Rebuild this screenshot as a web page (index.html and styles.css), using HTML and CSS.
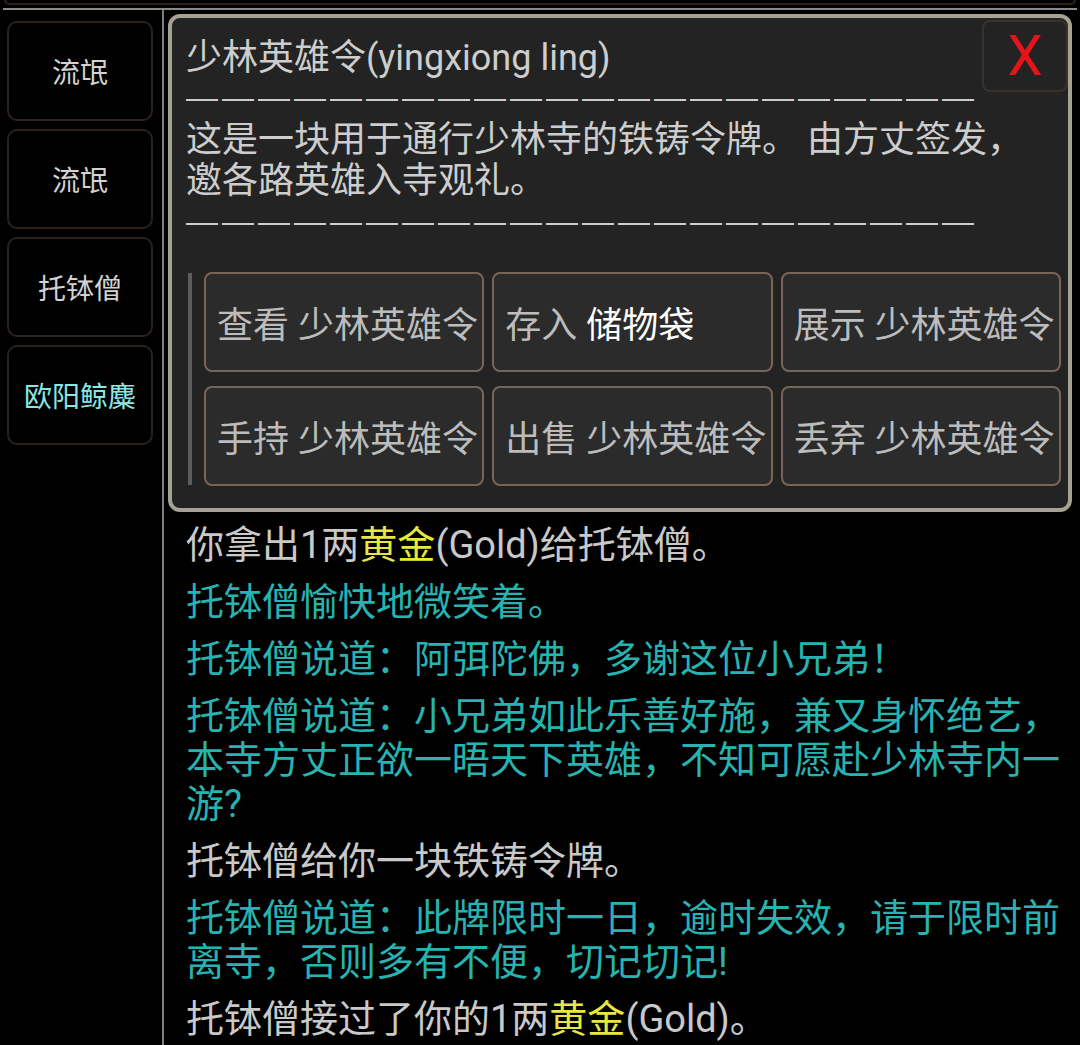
FILE: index.html
```html
<!DOCTYPE html>
<html lang="zh">
<head>
    <meta charset="UTF-8">
    <meta name="viewport" content="width=device-width, initial-scale=1.0">
    <title>少林英雄令</title>
    <link rel="stylesheet" href="styles.css">
</head>
<body>
<div class="topbox"></div>
<div class="rule"></div>
<div class="main">
    <div class="sidebar">
        <div class="npc">流氓</div>
        <div class="npc">流氓</div>
        <div class="npc">托钵僧</div>
        <div class="npc player">欧阳鲸麋</div>
    </div>
    <div class="content">
        <div class="modal">
            <div class="close">X</div>
            <div class="title">少林英雄令(yingxiong ling)</div>
            <div class="dash">——————————————————————</div>
            <div class="desc">这是一块用于通行少林寺的铁铸令牌。 由方丈签发，<br>邀各路英雄入寺观礼。</div>
            <div class="dash">——————————————————————</div>
            <div class="actions">
                <div class="bar"></div>
                <div class="grid">
                    <div class="act">查看 少林英雄令</div>
                    <div class="act">存入 <span class="bright">储物袋</span></div>
                    <div class="act">展示 少林英雄令</div>
                    <div class="act">手持 少林英雄令</div>
                    <div class="act">出售 少林英雄令</div>
                    <div class="act">丢弃 少林英雄令</div>
                </div>
            </div>
        </div>
        <div class="log">
            <p>你拿出1两<span class="gold">黄金</span>(Gold)给托钵僧。</p>
            <p class="cyan">托钵僧愉快地微笑着。</p>
            <p class="cyan">托钵僧说道：阿弭陀佛，多谢这位小兄弟！</p>
            <p class="cyan">托钵僧说道：小兄弟如此乐善好施，兼又身怀绝艺，本寺方丈正欲一晤天下英雄，不知可愿赴少林寺内一游?</p>
            <p>托钵僧给你一块铁铸令牌。</p>
            <p class="cyan">托钵僧说道：此牌限时一日，逾时失效，请于限时前离寺，否则多有不便，切记切记!</p>
            <p>托钵僧接过了你的1两<span class="gold">黄金</span>(Gold)。</p>
        </div>
    </div>
</div>
</body>
</html>
```

FILE: styles.css
```css
html, body {
    margin: 0;
    background: #000;
    overflow: hidden;
}

body {
    font-family: Roboto, "Noto Sans CJK SC", sans-serif;
    color: #c9c9c9;
}

.topbox {
    height: 3px;
    margin: 0 4px;
    border: 2px solid #2b221e;
    border-top: none;
    border-radius: 0 0 8px 8px;
}

.rule {
    height: 2px;
    margin: 3px 3px 0 3px;
    background: #8a8a8a;
}

.main {
    display: flex;
    min-height: calc(100vh - 10px);
}

.sidebar {
    width: 146px;
    padding: 11px 9px 0 7px;
    border-right: 2px solid #7d7d7d;
    flex-shrink: 0;
}

.npc {
    height: 96px;
    margin-bottom: 8px;
    border: 2px solid #2a211c;
    border-radius: 10px;
    display: flex;
    align-items: center;
    justify-content: center;
    font-size: 28px;
    color: #d2d2d2;
}

.npc.player {
    color: #8ae6e4;
}

.content {
    flex: 1;
    min-width: 0;
}

.modal {
    position: relative;
    margin: 4px 8px 0 4px;
    background: #232323;
    border: 4px solid #a5a193;
    border-radius: 12px;
    padding: 20px 7px 22px 14px;
    font-size: 36px;
    color: #cdcdcd;
}

.close {
    position: absolute;
    top: 2px;
    right: 0;
    width: 86px;
    height: 72px;
    box-sizing: border-box;
    border: 2px solid #3b312b;
    border-radius: 8px;
    display: flex;
    align-items: center;
    justify-content: center;
    color: #e4141a;
    font-size: 56px;
}

.title {
    line-height: 40px;
}

/* dashes need gaps between them, like the game's own separator */
.dash {
    font-family: "Liberation Sans", sans-serif;
    font-size: 32px;
    letter-spacing: 4px;
    line-height: 38px;
    white-space: nowrap;
    font-variant-ligatures: none;
}

.desc {
    line-height: 41px;
    margin-top: 4px;
}

.actions {
    display: flex;
    margin-top: 32px;
    margin-left: 2px;
}

.bar {
    width: 4px;
    margin: 1px 12px 1px 0;
    background: #5c5c5c;
}

.grid {
    flex: 1;
    display: grid;
    grid-template-columns: repeat(3, 1fr);
    gap: 14px 8px;
}

.act {
    height: 96px;
    border: 2px solid #7a6457;
    border-radius: 8px;
    background: #2b2b2b;
    display: flex;
    align-items: center;
    padding-left: 11px;
    white-space: nowrap;
    color: #bcbcbc;
}

.bright {
    color: #fff;
    margin-left: 9px;
}

.log {
    padding: 11px 10px 0 22px;
    font-size: 38px;
    line-height: 44px;
}

.log p {
    margin: 0 0 13px;
}

.cyan {
    color: #27b3b1;
}

.gold {
    color: #e8e640;
}
```
